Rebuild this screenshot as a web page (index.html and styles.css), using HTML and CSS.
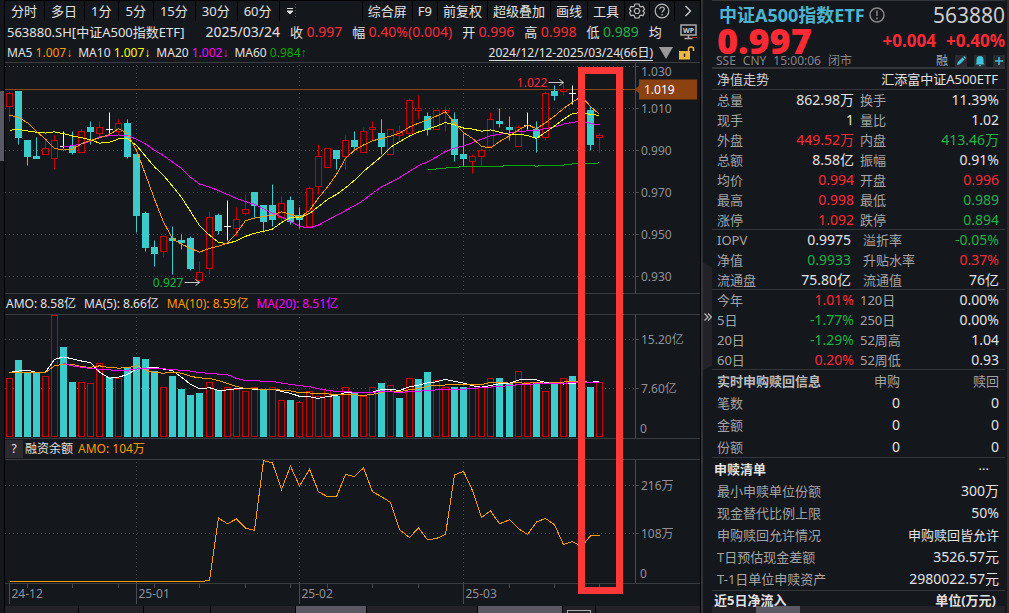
FILE: index.html
```html
<!DOCTYPE html>
<html lang="zh-CN">
<head>
    <meta charset="UTF-8" />
    <meta name="viewport" content="width=device-width, initial-scale=1.0" />
    <title>中证A500指数ETF 563880</title>
    <link rel="stylesheet" href="styles.css">
</head>
<body>

<div class="terminal">
    <div class="side-strip"><span class="side-thumb"></span></div>

    <main class="chart-area">
        <nav class="toolbar">
            <div class="periods">
                <button>分时</button>
                <button>多日</button>
                <button>1分</button>
                <button>5分</button>
                <button>15分</button>
                <button>30分</button>
                <button>60分</button>
                <button class="more" aria-label="更多周期">
                    <svg width="10" height="14" viewBox="0 0 10 14"><path d="M1 4.5h6M1 7h6L4 10z" fill="#ddd" stroke="#ddd"/><path d="M9.5 0v14" stroke="#555" stroke-dasharray="1 2"/></svg>
                </button>
            </div>
            <div class="tools">
                <button>综合屏</button>
                <button>F9</button>
                <button>前复权</button>
                <button>超级叠加</button>
                <button>画线</button>
                <button>工具</button>
                <button class="icon-btn" aria-label="设置">
                    <svg width="16" height="16" viewBox="0 0 16 16" fill="none" stroke="#bbb" stroke-width="1.2" stroke-linejoin="round"><path d="M6 1h4l.7 2.2 1.1.6 2.2-.5 1.5 3L14 8l1.5 1.7-1.5 3-2.2-.5-1.1.6L10 15H6l-.7-2.2-1.1-.6-2.2.5-1.5-3L2 8 .5 6.3l1.5-3 2.2.5 1.1-.6z"/><path d="M6.6 5.5h2.8L10.9 8l-1.5 2.5H6.6L5.1 8z"/></svg>
                </button>
                <button class="icon-btn" aria-label="帮助">
                    <svg width="16" height="16" viewBox="0 0 16 16" fill="none" stroke="#bbb" stroke-width="1.2"><circle cx="8" cy="8" r="6.8"/><path d="M5.8 6.3c0-3 4.5-3 4.5-.2 0 1.6-2.2 1.7-2.2 3.5M8.100 11v1.4"/></svg>
                </button>
                <button class="icon-btn" aria-label="展开">
                    <svg width="8" height="12" viewBox="0 0 8 12" fill="none" stroke="#ccc" stroke-width="1.4"><path d="M1.5 1l5 5-5 5"/></svg>
                </button>
            </div>
        </nav>

        <header class="quote-row">
            <span class="code">563880.SH[中证A500指数ETF]</span>
            <span class="day">2025/03/24</span>
            <span class="pair">收 <b class="up">0.997</b></span>
            <span class="pair">幅 <b class="up">0.40%(0.004)</b></span>
            <span class="pair">开 <b class="up">0.996</b></span>
            <span class="pair">高 <b class="up">0.998</b></span>
            <span class="pair">低 <b class="down">0.989</b></span>
            <span class="pair">均</span>
            <svg class="wp" width="17" height="16" viewBox="0 0 17 16"><path d="M1 1h15v10H1z" fill="none" stroke="#aaa" stroke-width="1.5"/><path d="M8.5 11v3M4.5 14.5h8" stroke="#aaa" stroke-width="1.5"/><path d="M12 13.5h5" stroke="#b22"/><text x="8.5" y="9" text-anchor="middle" class="wp-text">WP</text></svg>
        </header>

        <div class="legend-row">
            <span>MA5 <b class="c-orange">1.007↓</b></span>
            <span>MA10 <b class="c-yellow">1.007↓</b></span>
            <span>MA20 <b class="c-magenta">1.002↓</b></span>
            <span>MA60 <b class="c-green">0.984↑</b></span>
            <button class="range">2024/12/12-2025/03/24(66日)</button>
            <svg width="14" height="12" viewBox="0 0 14 12"><path d="M0 0h14L7 12z" fill="#999"/></svg>
            <svg width="16" height="14" viewBox="0 0 16 14"><path d="M0 5h11v8.5H0z" fill="#f5b53c"/><path d="M9.5 5V3c0-2.8 5-2.8 5 0v2" fill="none" stroke="#f5b53c" stroke-width="1.5"/><path d="M5.5 7.5v3.5" stroke="#222" stroke-width="1.5"/></svg>
        </div>

        <section class="charts">
            <svg class="plot price-plot" id="price"></svg>
            <div class="sub-head amount-head">
                <span>AMO: 8.58亿</span>
                <span>MA(5): 8.66亿</span>
                <span class="c-orange">MA(10): 8.59亿</span>
                <span class="c-magenta">MA(20): 8.51亿</span>
            </div>
            <svg class="plot sub-plot" id="amount"></svg>
            <div class="sub-head">
                <button class="hint">?</button>
                <span>融资余额</span>
                <span class="c-orange">AMO: 104万</span>
            </div>
            <svg class="plot sub-plot" id="margin"></svg>
            <svg class="plot date-axis" id="dates"></svg>
            <div class="marker"></div>
        </section>

        <div class="tab-strip">
            <i style="flex-grow: 75"></i>
            <i style="flex-grow: 65"></i>
            <i style="flex-grow: 67"></i>
            <i style="flex-grow: 86"></i>
            <i class="on" style="flex-grow: 72"></i>
            <i style="flex-grow: 112"></i>
            <i class="on" style="flex-grow: 86"></i>
            <i class="win" style="flex-grow: 25"><span></span></i>
            <i style="flex-grow: 106"></i>
        </div>
    </main>

    <div class="splitter">
        <button class="collapse" aria-label="收起">
            <svg width="8" height="8" viewBox="0 0 8 8" fill="none" stroke="#bbb" stroke-width="1.2"><path d="M.5.5L4 4 .5 7.5M4 .5L7.5 4 4 7.5"/></svg>
        </button>
    </div>

    <aside class="quote-panel">
        <header class="quote-head">
            <div class="name-line">
                <h1>中证A500指数ETF</h1>
                <svg width="16" height="16" viewBox="0 0 16 16" fill="none" stroke="#888" stroke-width="1.5"><circle cx="8" cy="8" r="7"/><path d="M8 3.5V9M8 10.5v1.7"/></svg>
                <span class="ticker">563880</span>
            </div>
            <div class="price-line">
                <strong>0.997</strong>
                <span>+0.004</span>
                <span>+0.40%</span>
            </div>
            <div class="status-line">
                <span>SSE</span>
                <span>CNY</span>
                <span>15:00:06</span>
                <span>闭市</span>
                <span class="badge">融</span>
                <button aria-label="编辑"><svg width="12" height="12" viewBox="0 0 12 12"><path d="M2 10l.7-2.8L7.5 2.4l2.1 2.1-4.8 4.8zM8.1 1.8l1-.9 2.1 2.1-1 .9z" fill="#3bc4dc"/></svg></button>
                <button aria-label="提醒"><svg width="12" height="12" viewBox="0 0 12 12"><path d="M6 1C3.7 1 2.5 2.7 2.5 4.7V8L1.3 9.5h9.4L9.5 8V4.7C9.5 2.7 8.3 1 6 1zM4.5 10h3L6 11.5z" fill="#3bc4dc"/></svg></button>
                <button aria-label="添加"><svg width="12" height="12" viewBox="0 0 12 12"><path d="M6 2v8M2 6h8" stroke="#3bc4dc" stroke-width="1.5"/></svg></button>
            </div>
        </header>

        <div class="nav-line"><span>净值走势</span><a href="#">汇添富中证A500ETF</a></div>

        <table class="quotes">
            <tr><th>总量</th><td>862.98万</td><th>换手</th><td>11.39%</td></tr>
            <tr><th>现手</th><td>1</td><th>量比</th><td>1.02</td></tr>
            <tr><th>外盘</th><td class="up">449.52万</td><th>内盘</th><td class="down">413.46万</td></tr>
            <tr><th>总额</th><td>8.58亿</td><th>振幅</th><td>0.91%</td></tr>
            <tr><th>均价</th><td class="up">0.994</td><th>开盘</th><td class="up">0.996</td></tr>
            <tr><th>最高</th><td class="up">0.998</td><th>最低</th><td class="down">0.989</td></tr>
            <tr><th>涨停</th><td class="up">1.092</td><th>跌停</th><td class="down">0.894</td></tr>
        </table>
        <table class="quotes inset">
            <tr><th>IOPV</th><td>0.9975</td><th>溢折率</th><td class="down">-0.05%</td></tr>
            <tr><th>净值</th><td class="down">0.9933</td><th>升贴水率</th><td class="up">0.37%</td></tr>
            <tr><th>流通盘</th><td>75.80亿</td><th>流通值</th><td>76亿</td></tr>
        </table>
        <table class="quotes">
            <tr><th>今年</th><td class="up">1.01%</td><th>120日</th><td>0.00%</td></tr>
            <tr><th>5日</th><td class="down">-1.77%</td><th>250日</th><td>0.00%</td></tr>
            <tr><th>20日</th><td class="down">-1.29%</td><th>52周高</th><td>1.04</td></tr>
            <tr><th>60日</th><td class="up">0.20%</td><th>52周低</th><td>0.93</td></tr>
        </table>
        <table class="orders">
            <tr><th class="strong">实时申购赎回信息</th><th>申购</th><th>赎回</th></tr>
            <tr><th>笔数</th><td>0</td><td>0</td></tr>
            <tr><th>金额</th><td>0</td><td>0</td></tr>
            <tr><th>份额</th><td>0</td><td>0</td></tr>
        </table>
        <div class="block-head"><h2>申赎清单</h2><button aria-label="更多">···</button></div>
        <table class="list">
            <tr><th>最小申赎单位份额</th><td>300万</td></tr>
            <tr><th>现金替代比例上限</th><td>50%</td></tr>
            <tr><th>申购赎回允许情况</th><td class="zh">申购赎回皆允许</td></tr>
            <tr><th>T日预估现金差额</th><td>3526.57元</td></tr>
            <tr><th>T-1日单位申赎资产</th><td>2980022.57元</td></tr>
        </table>
        <div class="block-head last"><h2>近5日净流入</h2><h2>单位(万元)</h2></div>
        <div class="scroll-x"><span></span></div>
    </aside>
</div>

<script src="chart.js"></script>
</body>
</html>
```
FILE: styles.css
```css
* { box-sizing: border-box; }
body {
    margin: 0;
    background: #14171b;
    color: #e2e2e2;
    font-family: 'Noto Sans', 'Liberation Sans', 'Noto Sans CJK SC', sans-serif;
    font-size: 13px;
    line-height: 20px;
    overflow-x: hidden;
}
button {
    padding: 0;
    border: none;
    background: none;
    color: inherit;
    font: inherit;
    cursor: pointer;
}
b { font-weight: normal; }
svg { display: block; flex-shrink: 0; }
table { width: 100%; border-collapse: collapse; table-layout: fixed; }
th, td { padding: 0; white-space: nowrap; }
th { font-weight: normal; text-align: left; color: #a4a4a4; }
td { text-align: right; font-size: 14px; }

.up { color: #fb2a34; }
.down { color: #1eb344; }
.c-orange { color: #ff9900; }
.c-yellow { color: #ffff00; }
.c-magenta { color: #ff00ff; }
.c-green { color: #00a800; }

.terminal {
    display: grid;
    grid-template-columns: 5px minmax(0, 1fr) 11px 293px;
    padding-right: 2px;
    min-height: 100vh;
    border-right: 2px solid #2b2c31;
}
.side-strip {
    padding-top: 91px;
    border-right: 1px solid #000;
}
.side-thumb { display: block; height: 70px; background: #5a5963; }

/* toolbar */
.chart-area { display: flex; flex-direction: column; border-right: 1px solid #000; }
.toolbar {
    display: flex;
    justify-content: space-between;
    height: 21px;
    border-top: 1px solid #000;
}
.periods, .tools { display: flex; }
.toolbar button { border-right: 1px solid #000; padding: 0 5px; }
.periods button { padding: 0 7px 0 6px; }
.periods .more { border: none; }
.tools { border-left: 1px solid #000; }
.toolbar .icon-btn {
    display: flex;
    justify-content: center;
    align-items: center;
    width: 25px;
    padding: 0;
}
.toolbar .icon-btn:last-child { border: none; }

.quote-row {
    display: flex;
    align-items: center;
    gap: 10px;
    height: 22px;
    padding: 0 3px 0 2px;
    white-space: nowrap;
}
.day { margin-left: 11px; font-size: 14px; }
.pair b { font-size: 14px; }
.wp { margin-left: auto; }
.wp-text { font-size: 7px; font-weight: bold; fill: #ccc; }

.legend-row {
    display: flex;
    align-items: center;
    gap: 6px;
    height: 19px;
    padding: 0 5px 0 2px;
    font-size: 12px;
    white-space: nowrap;
}
.range {
    margin-left: auto;
    border-bottom: 1px solid #ddd;
    line-height: 15px;
}

/* charts */
.charts { position: relative; }
.plot { width: 100%; border-top: 1px solid #3b3c40; font-size: 12px; }
.price-plot { height: 231px; }
.sub-plot { height: 124px; }
.date-axis { height: 23px; }
.sub-head {
    display: flex;
    align-items: center;
    gap: 5px;
    height: 21px;
    border-top: 1px solid #3b3c40;
    font-size: 12px;
}
.amount-head { gap: 8px; padding-left: 1px; }
.hint { width: 18px; height: 18px; margin-right: -3px; background: #2b2a30; line-height: 18px; }
.marker {
    position: absolute;
    top: 5px;
    right: 77px;
    bottom: 12px;
    width: 45px;
    border: 7px solid #fc3838;
}

.plot text { fill: #8f9196; }
.plot .frame { stroke: #4a4b50; }
.plot .grid { stroke: #45464b; stroke-dasharray: 1 3; }
.plot .rise { fill: #14171b; stroke: #c80000; }
.plot .fall { fill: #3ccbcb; stroke: #3ccbcb; }
.plot .flat { fill: #fff; stroke: #fff; }
.plot .line { fill: none; stroke-width: 1; }
.plot .s-white { stroke: #fff; }
.plot .s-orange { stroke: #ff9900; }
.plot .s-yellow { stroke: #ffff00; }
.plot .s-magenta { stroke: #ff00ff; }
.plot .s-green { stroke: #00a800; }
.plot .arrow { fill: none; stroke: #ccc; }
.plot .ref { stroke: #8b4a14; }
.plot .tag { fill: #8b4210; }
.plot .tag-text { fill: #fff; }
.plot .high-text { fill: #fb2a34; }
.plot .low-text { fill: #1eb344; }

.tab-strip { display: flex; gap: 1px; height: 7px; background: #000; }
.tab-strip i { flex-basis: 0; background: #232228; }
.tab-strip .on { background: #5a5963; }
.tab-strip .win { padding: 4px 4px 0; }
.win span { display: block; height: 3px; border: 1px solid #aaa; border-bottom: none; }

.splitter {
    display: flex;
    align-items: center;
    border-left: 2px solid #333338;
    padding-top: 20px;
}
.collapse {
    display: flex;
    justify-content: center;
    align-items: center;
    width: 10px;
    height: 108px;
    background: #232228;
    clip-path: polygon(0 0, 100% 5px, 100% 103px, 0 100%);
}

/* quote panel */
.quote-head { height: 69px; border-top: 1px solid #34353a; border-bottom: 2px solid #34353a; }
.name-line { display: flex; align-items: center; gap: 4px; height: 27px; padding-left: 7px; }
h1 { margin: 0; font-size: 18px; color: #4fb3cd; }
.ticker { margin-left: auto; font-size: 21px; color: #ccc; }
.price-line {
    display: flex;
    align-items: center;
    gap: 10px;
    height: 25px;
    padding-left: 5px;
    font-size: 17px;
    font-weight: bold;
    color: #fb2a34;
}
.price-line strong { margin-right: auto; font-size: 36px; }
.status-line {
    display: flex;
    align-items: center;
    gap: 7px;
    height: 16px;
    padding-left: 4px;
    font-size: 12px;
    color: #85868a;
}
.badge { margin-left: auto; color: #aaa; }
.status-line button { width: 12px; height: 12px; background: #2b2a30; }
.nav-line {
    display: flex;
    justify-content: space-between;
    padding: 0 7px 0 5px;
    border-bottom: 1px solid #34353a;
    color: #ccc;
}
.nav-line a { color: #e2e2e2; text-decoration: none; }
.quotes th, .quotes td { height: 20px; }
.quotes, .orders { box-shadow: inset 0 -1px #34353a; }
.quotes th:first-child { width: 62px; padding-left: 5px; }
.quotes td:nth-child(2) { width: 80px; }
.quotes th:nth-child(3) { padding-left: 6px; }
.quotes td:last-child { padding-right: 6px; }
.inset td:nth-child(2) { width: 77px; }
.inset th:nth-child(3) { padding-left: 12px; }
.orders th, .orders td { height: 22px; text-align: right; }
.orders th:first-child { padding-left: 5px; text-align: left; }
.orders th:nth-child(2) { width: 70px; }
.orders th:last-child { width: 105px; }
.orders th:last-child, .orders td:last-child { padding-right: 6px; }
.orders .strong { font-weight: bold; color: #bbb; }
.block-head {
    display: flex;
    justify-content: space-between;
    padding: 0 16px 0 2px;
    line-height: 22px;
}
.block-head.last {
    height: 16px;
    padding-right: 9px;
    border-top: 1px solid #34353a;
    line-height: 18px;
}
h2 { margin: 0; font-size: 13px; }
.list th, .list td { height: 22px; }
.list th { width: 150px; padding-left: 5px; }
.list td { padding-right: 6px; }
.list .zh { font-size: 13px; }
.scroll-x { height: 7px; padding-left: 44px; background: #232228; }
.scroll-x span { display: block; width: 44px; height: 7px; background: #5a5963; }
```
FILE: chart.js
```js
const AXIS_WIDTH = 65;

// open, high, low, close in 0.001 yuan
const candles = [
    [1011,1018,1004,1017], [1018,1018,993,996], [995,995,983,987], [987,996,986,986],
    [988,996,988,991], [986,997,981,995], [992,999,991,992], [992,999,988,989],
    [989,1000,989,999], [1001,1004,993,999], [998,1004,996,1001], [1000,1008,998,1000],
    [999,1005,998,1003], [1003,1005,986,987], [988,988,951,959], [960,961,942,944],
    [944,947,935,941], [942,950,939,949], [948,954,931,947], [947,950,943,946],
    [948,949,933,934], [928,937,927,932], [934,961,931,958], [959,960,950,952],
    [954,966,947,954], [953,963,949,957], [960,969,959,962], [970,970,958,964],
    [964,964,951,956], [964,974,954,957], [958,968,956,965], [966,968,955,956],
    [959,963,953,957], [954,973,954,972], [973,993,969,987], [982,991,982,991],
    [990,990,981,986], [987,997,981,995], [995,999,990,992], [989,1001,989,999],
    [1000,1004,995,1001], [998,1005,988,992], [988,1000,988,1000], [997,1002,995,999],
    [998,1015,998,1014], [1009,1016,1005,1010], [1006,1008,997,1000], [1000,1009,1000,1009],
    [1008,1011,999,1009], [1005,1008,985,988], [988,998,983,986], [985,988,979,987],
    [987,991,983,990], [992,1008,992,1005], [1004,1010,1001,1003], [1001,1006,995,1000],
    [992,1002,992,1001], [1002,1008,1000,1002], [1000,1004,989,996], [996,1018,995,1017],
    [1018,1021,1014,1016], [1018,1022,1016,1019], [1017,1021,1012,1017], [1016,1018,1008,1010],
    [1009,1011,990,993], [996,998,989,997]
];
// amount, in 100 million yuan
const amounts = [
    9.1,11.9,10.1,10.1,9.5,18.9,13.9,8.5,8.5,8.3,11.4,9.3,9.2,10.7,12.4,12.1,10.2,7.7,9.4,7.4,6.5,6.8,
    8.5,7.3,7.8,7.4,7.2,7.7,7.4,7.7,5.7,5.7,5.4,7.1,6.4,7.3,6.3,7.8,7.0,6.3,7.7,8.4,8.0,6.0,
    9.2,9.0,10.1,8.9,7.8,7.7,7.7,8.0,7.8,9.1,9.1,8.2,10.3,8.6,8.4,7.1,8.2,9.1,9.4,8.5,7.7,8.6
];
const marginBalance = [
    0,0,0,0,0,0,0,0,0,0,0,0,0,0,0,0,0,0,0,0,0,0,
    2,143,130,141,120,115,272,267,207,260,215,253,202,191,191,241,236,256,202,191,178,117,
    99,121,94,97,106,240,248,205,144,159,130,139,119,106,134,142,128,83,90,78,103,104
];
// days before the visible range, for the moving averages
const closesBefore = [977,983,971,960,991,995,992,995,989,1001,1000,1007,1009];
const amountsBefore = [17,12.5,12,14,11.4,11.1,9.6,9,8.9,10.9,9.3,11.9,9.3];

const months = { 0: '24-12', 14: '25-01', 32: '25-02', 50: '25-03' };
const weekTicks = [2, 7, 12, 16, 21, 26, 31, 35, 40, 45, 55, 60, 65];

function add(svg, name, attrs, text) {
    const el = document.createElementNS('http://www.w3.org/2000/svg', name);
    for (const key in attrs) el.setAttribute(key, attrs[key]);
    if (text !== undefined) el.textContent = text;
    svg.appendChild(el);
}

function line(svg, x1, y1, x2, y2, cls) {
    add(svg, 'line', { x1, y1, x2, y2, class: cls });
}

function snap(v) { return Math.floor(v) + 0.5; }

function average(before, values, n) {
    const all = before.concat(values);
    return values.map((v, i) => {
        const end = before.length + i + 1;
        if (end < n) return null;
        return all.slice(end - n, end).reduce((a, b) => a + b, 0) / n;
    });
}

function prepare(id) {
    const svg = document.getElementById(id);
    svg.textContent = '';
    const plotWidth = svg.getBoundingClientRect().width - AXIS_WIDTH;
    const step = plotWidth / 69.3;
    return { svg, plotWidth, step, x: i => snap(4 + i * step) };
}

function series(c, values, y, cls) {
    const points = values.map((v, i) => v === null ? '' : c.x(i) + ',' + y(v)).join(' ').trim();
    add(c.svg, 'polyline', { points, class: 'line ' + cls, 'shape-rendering': 'crispEdges' });
}

function drawGrid(c, levels, height) {
    levels.forEach(level => {
        line(c.svg, 0, level.y, c.plotWidth, level.y, 'grid');
        line(c.svg, c.plotWidth, level.y, c.plotWidth + 4, level.y, 'frame');
        add(c.svg, 'text', { x: c.plotWidth + 6, y: (level.textY || level.y) + 4 }, level.label);
    });
    [14, 32, 50].forEach(i => line(c.svg, c.x(i), 2, c.x(i), height, 'grid'));
    line(c.svg, snap(c.plotWidth), 0, snap(c.plotWidth), height, 'frame');
}

function drawPrice() {
    const c = prepare('price');
    const y = p => 3.5 + (1030 - p) * 2.1;
    const levels = [1030, 1010, 990, 970, 950, 930].map(p => ({
        y: snap(y(p)), textY: p === 1030 ? 9 : 0, label: (p / 1000).toFixed(3)
    }));
    drawGrid(c, levels, 231);
    line(c.svg, 0, 26.5, c.plotWidth, 26.5, 'ref');

    candles.forEach(([open, high, low, close], i) => {
        const x = c.x(i);
        const cls = close === open ? 'flat' : close > open ? 'rise' : 'fall';
        const top = snap(y(Math.max(open, close)));
        const bottom = Math.max(snap(y(Math.min(open, close))), top + (cls === 'flat' ? 0 : 1));
        line(c.svg, x, snap(y(high)), x, snap(y(low)), cls);
        if (cls === 'flat') line(c.svg, x - 3.5, top, x + 3.5, top, cls);
        else add(c.svg, 'rect', { x: x - 3, y: top, width: 6, height: bottom - top, class: cls });
    });

    const closes = candles.map(d => d[3]);
    series(c, average(closesBefore, closes, 60), y, 's-green');
    series(c, average(closesBefore, closes, 20), y, 's-magenta');
    series(c, average(closesBefore, closes, 10), y, 's-yellow');
    series(c, average(closesBefore, closes, 5), y, 's-orange');

    // highest and lowest price of the range
    const hx = c.x(61), lx = c.x(21);
    add(c.svg, 'text', { x: hx - 16, y: 24, 'text-anchor': 'end', class: 'high-text' }, '1.022');
    add(c.svg, 'path', { d: `M${hx - 15} 19.5H${hx}m-4 -3l4 3l-4 3`, class: 'arrow' });
    add(c.svg, 'text', { x: lx - 16, y: 224, 'text-anchor': 'end', class: 'low-text' }, '0.927');
    add(c.svg, 'path', { d: `M${lx - 15} 219.5H${lx}m-4 -3l4 3l-4 3`, class: 'arrow' });

    const w = c.plotWidth;
    add(c.svg, 'path', { d: `M${w} 26.5l4 -4v-6h58v20h-58v-6z`, class: 'tag' });
    add(c.svg, 'text', { x: w + 9, y: 31, class: 'tag-text' }, '1.019');
}

function drawAmount() {
    const c = prepare('amount');
    const y = v => 122.5 - v * 6.45;
    drawGrid(c, [
        { y: snap(y(15.2)), label: '15.20亿' },
        { y: snap(y(7.6)), label: '7.60亿' }
    ], 124);
    add(c.svg, 'text', { x: c.plotWidth + 5, y: 118 }, '0');
    amounts.forEach((v, i) => {
        const prev = i ? candles[i - 1][3] : closesBefore[12];
        const top = Math.max(snap(y(v)), 0.5);
        add(c.svg, 'rect', {
            x: c.x(i) - 3, y: top, width: 6, height: 121.5 - top,
            class: candles[i][3] >= prev ? 'rise' : 'fall'
        });
    });
    series(c, average(amountsBefore, amounts, 5), y, 's-white');
    series(c, average(amountsBefore, amounts, 10), y, 's-orange');
    series(c, average(amountsBefore, amounts, 20), y, 's-magenta');
}

function drawMargin() {
    const c = prepare('margin');
    const y = v => 121.5 - v * 0.444;
    drawGrid(c, [
        { y: snap(y(216)), label: '216万' },
        { y: snap(y(108)), label: '108万' }
    ], 124);
    add(c.svg, 'text', { x: c.plotWidth + 5, y: 118 }, '0');
    series(c, marginBalance, y, 's-orange');
}

function drawDates() {
    const c = prepare('dates');
    weekTicks.forEach(i => line(c.svg, c.x(i), 0, c.x(i), 4, 'frame'));
    for (const i in months) {
        line(c.svg, c.x(+i), 0, c.x(+i), 20, 'frame');
        add(c.svg, 'text', { x: c.x(+i) + 2, y: 14 }, months[i]);
    }
}

function draw() {
    drawPrice();
    drawAmount();
    drawMargin();
    drawDates();
}

window.addEventListener('resize', draw);
draw();
```
